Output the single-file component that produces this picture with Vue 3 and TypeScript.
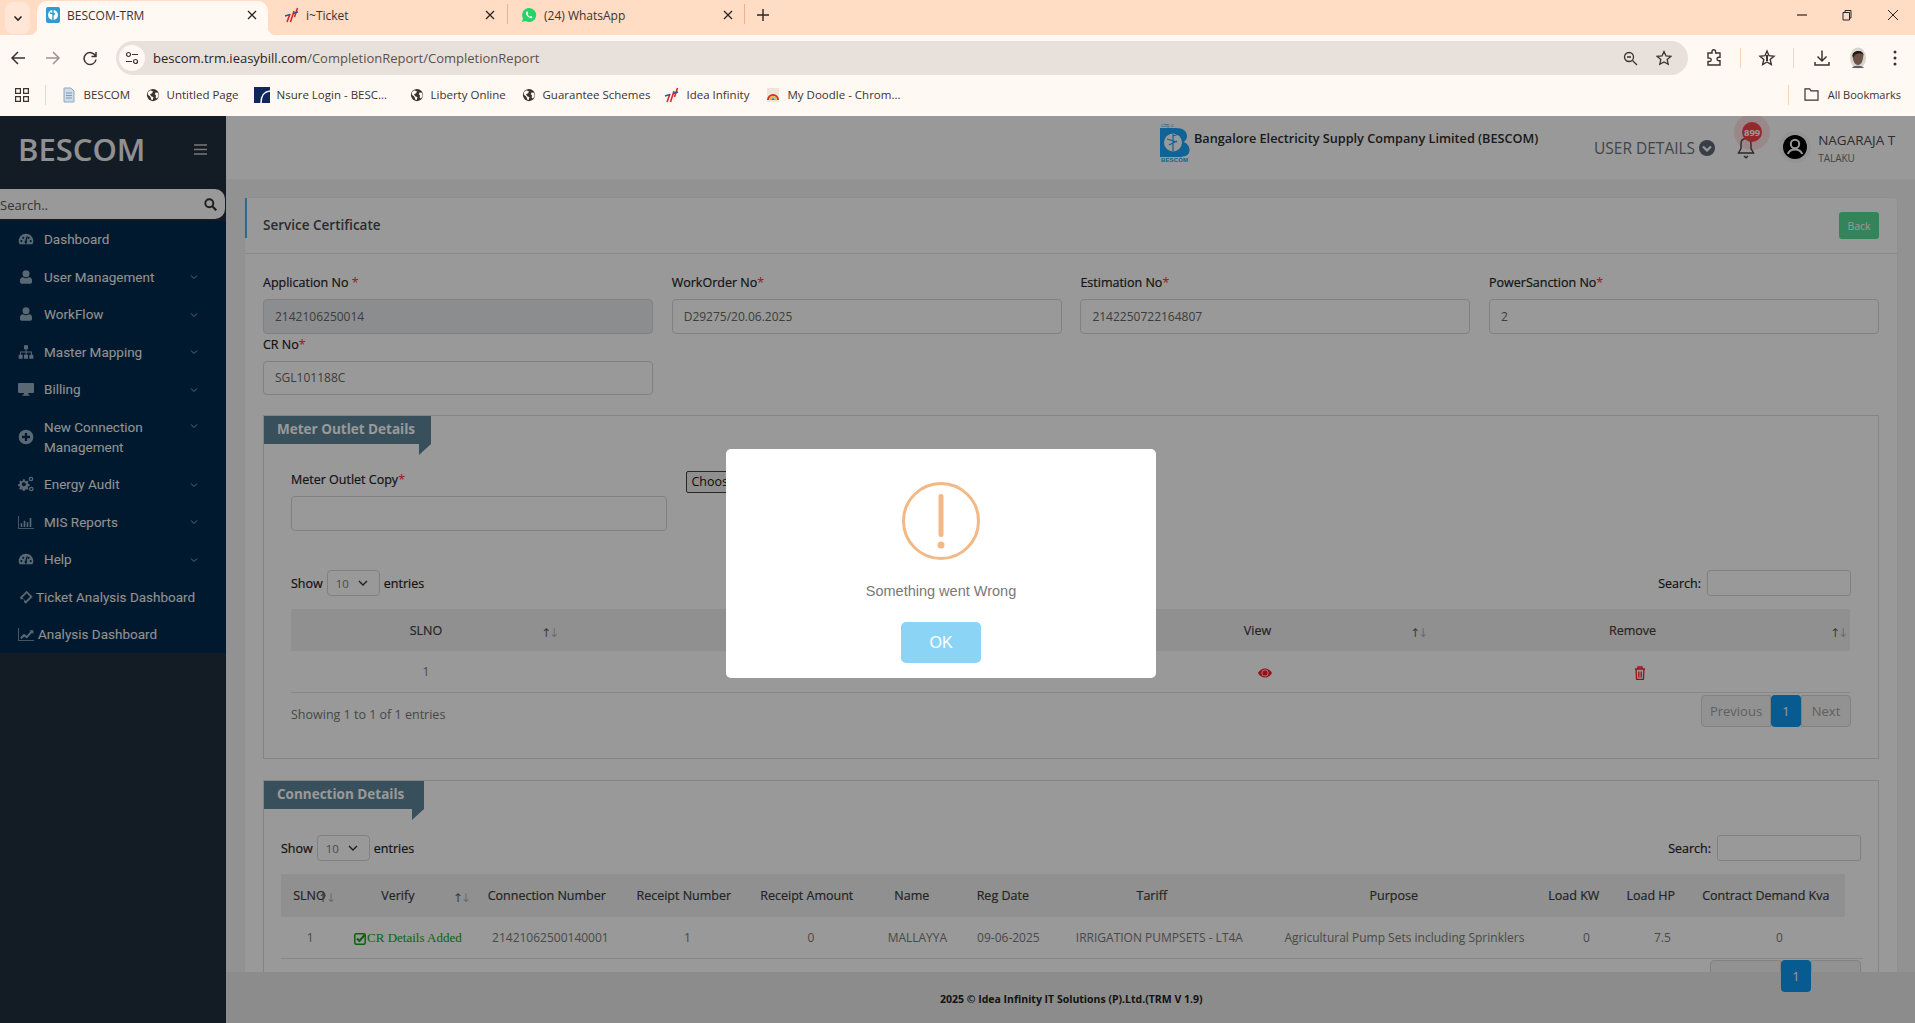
<script setup lang="ts">
interface NavItem { label: string; icon: string; caret: boolean; cls?: string }

const icons: Record<string, string> = {
  gauge: 'M12 4C5.9 4 1 8.9 1 15c0 2 .5 3.700 1.400 5h19.200c.9-1.300 1.400-3 1.400-5 0-6.100-4.900-11-11-11zM5 13.500a1.500 1.500 0 1 0 .01 0zM8 8.500a1.500 1.500 0 1 0 .01 0zM16 8.500a1.500 1.500 0 1 0 .01 0zM19 13.500a1.500 1.500 0 1 0 .01 0zM13 8l-2.200 7.100a2 2 0 1 0 2.400.4L14.500 8z',
  user: 'M12 2a5 5 0 1 1 0 10.500A5 5 0 0 1 12 2zM5.500 22c-1.500 0-2.500-1-2.500-2.500V17c0-3 2-4.500 4.500-4.500 1.200 1 2.800 1.500 4.500 1.500s3.300-.5 4.500-1.500C19 12.500 21 14 21 17v2.500c0 1.500-1 2.500-2.500 2.500z',
  sitemap: 'M9 2h6v6h-6zM1 16h6v6H1zM9 16h6v6H9zM17 16h6v6h-6zM11.300 8h1.400v3.300h8.300V16h-1.400v-3.300h-6.900V16h-1.400v-3.300H4.400V16H3v-4.700h8.300z',
  desktop: 'M1.500 3h21A1.500 1.500 0 0 1 24 4.500v12a1.500 1.500 0 0 1-1.500 1.500H15l.8 2.500h1.700V22h-11v-1.500h1.700L9 18H1.500A1.500 1.500 0 0 1 0 16.500v-12A1.500 1.500 0 0 1 1.500 3z',
  plus: 'M12 1a11 11 0 1 1 0 22 11 11 0 0 1 0-22zM10.300 6v4.300H6v3.400h4.300V18h3.400v-4.300H18v-3.400h-4.300V6z',
  cogs: 'M7.500 5h2.500l.5 2 1.800.8 1.700-1.100 1.700 1.800-1 1.700.7 1.800 2 .5v2.500l-2 .5-.7 1.800 1 1.700-1.700 1.800-1.700-1.100-1.800.8-.5 2H7.500l-.5-2-1.800-.8-1.700 1.100-1.700-1.800 1-1.700-.7-1.800-2-.5v-2.500l2-.5.7-1.800-1-1.700 1.700-1.800 1.700 1.100L7 7zM8.800 9.500a3 3 0 1 0 0 6 3 3 0 0 0 0-6zM19.500 1a3.500 3.500 0 1 1 0 7 3.500 3.500 0 0 1 0-7zm0 2a1.500 1.500 0 1 0 0 3 1.500 1.500 0 0 0 0-3zM20 16a3.500 3.500 0 1 1 0 7 3.500 3.500 0 0 1 0-7zm0 2a1.500 1.500 0 1 0 0 3 1.500 1.500 0 0 0 0-3z',
  bars: 'M0 3h1.200v18H24v1.200H0zM4 14h2.400v5.500H4zM8.500 10H11v9.500H8.500zM13 12.500h2.400v7H13zM17.500 6H20v13.500h-2.500z',
  ticket: 'M13 2.500l9 9-10.500 10.500-2.800-2.800a2.300 2.300 0 0 0-3.300-3.300L2.500 13zM13 6.500l-6.500 6.500 5 5 6.500-6.500z',
  line: 'M0 3h1.200v18H24v1.200H0zM3.500 17l5.500-5.500 4 3L19 8l-2-1.800h6v5.800l-2-2-7.700 8.700-4-3-4.300 4.300z',
}

const navItems: NavItem[] = [
  { label: 'Dashboard', icon: 'gauge', caret: false },
  { label: 'User Management', icon: 'user', caret: true },
  { label: 'WorkFlow', icon: 'user', caret: true },
  { label: 'Master Mapping', icon: 'sitemap', caret: true },
  { label: 'Billing', icon: 'desktop', caret: true },
  { label: 'New Connection Management', icon: 'plus', caret: true, cls: 'two' },
  { label: 'Energy Audit', icon: 'cogs', caret: true },
  { label: 'MIS Reports', icon: 'bars', caret: true },
  { label: 'Help', icon: 'gauge', caret: true },
  { label: 'Ticket Analysis Dashboard', icon: 'ticket', caret: false, cls: 'tight' },
  { label: 'Analysis Dashboard', icon: 'line', caret: false, cls: 'tight2' },
]

const bookmarks = [
  { icon: 'bm-doc', label: 'BESCOM', w: 16, slot: 85 },
  { icon: 'globe', label: 'Untitled Page', w: 14, slot: 108 },
  { icon: 'bm-nsure', label: 'Nsure Login - BESC...', w: 16, slot: 156 },
  { icon: 'globe', label: 'Liberty Online', w: 14, slot: 112 },
  { icon: 'globe', label: 'Guarantee Schemes', w: 14, slot: 142 },
  { icon: 'bm-idea', label: 'Idea Infinity', w: 16, slot: 101 },
  { icon: 'bm-doodle', label: 'My Doodle - Chrom...', w: 16, slot: 140 },
]

const topFields = [
  { label: 'Application No ', value: '2142106250014', disabled: true },
  { label: 'WorkOrder No', value: 'D29275/20.06.2025', disabled: false },
  { label: 'Estimation No', value: '2142250722164807', disabled: false },
  { label: 'PowerSanction No', value: '2', disabled: false },
  { label: 'CR No', value: 'SGL101188C', disabled: false },
]

const connHead = ['SLNO', 'Verify', 'Connection Number', 'Receipt Number', 'Receipt Amount', 'Name', 'Reg Date', 'Tariff', 'Purpose', 'Load KW', 'Load HP', 'Contract Demand Kva', '']
const connHeadW = [56.8, 120, 178, 96, 150, 60, 122, 176, 308, 52, 102, 128, 15]
const connBodyW = [58.4, 137, 148, 126, 121, 92, 90, 212, 278, 86, 66, 168]
const connCells = ['21421062500140001', '1', '0', 'MALLAYYA', '09-06-2025', 'IRRIGATION PUMPSETS - LT4A', 'Agricultural Pump Sets including Sprinklers', '0', '7.5', '0']
</script>

<template>
  <div class="app">
    <svg width="0" height="0" class="defs" aria-hidden="true">
      <symbol id="globe" viewBox="0 0 16 16">
        <circle cx="8" cy="8" r="7" fill="#3a3330" />
        <path d="M5 2.500l3 1.500-1 2-2.500 1L6 9.500l2.500 1-1 3.500-1.500-1-1-3-3-2.500.5-3zM11 5l3 .5.5 4-2 2.500-1.500-1 .5-2.500-1.500-1.500z" fill="#fff8f3" />
      </symbol>
      <symbol id="bm-doc" viewBox="0 0 16 16">
        <path d="M3 1h7l3 3v11H3z" fill="#cfdbe8" stroke="#8ea9c4" stroke-width="1" />
        <path d="M5 6h6M5 8.500h6M5 11h6" stroke="#7f9ab5" stroke-width="1" />
      </symbol>
      <symbol id="bm-nsure" viewBox="0 0 16 16">
        <rect x="0" y="0" width="16" height="16" fill="#10265c" />
        <path d="M7 16C7 9 9 5 16 4" fill="none" stroke="#fff" stroke-width="1.500" />
      </symbol>
      <symbol id="bm-idea" viewBox="0 0 16 16">
        <path d="M3 15l3-8M6.500 15l3.500-11M10.500 10l3-9" stroke="#d62b2b" stroke-width="1.600" fill="none" />
        <path d="M1 9l5-1.500M9 6.500l5-1.500" stroke="#2456a8" stroke-width="1.400" fill="none" />
      </symbol>
      <symbol id="bm-doodle" viewBox="0 0 16 16">
        <rect x="2" y="1" width="12" height="14" fill="#eee4da" />
        <path d="M3 13a5 5 0 0 1 10 0" fill="none" stroke="#d93025" stroke-width="2" />
        <path d="M5 13a3 3 0 0 1 6 0" fill="none" stroke="#f2b705" stroke-width="1.500" />
        <path d="M7 13a1 1 0 0 1 2 0" fill="none" stroke="#1a73e8" stroke-width="1.500" />
      </symbol>
    </svg>

    <!-- Browser chrome -->
    <div class="chrome">
      <div class="tabstrip">
        <button class="tabmenu" aria-label="Tabs">
          <svg width="12" height="12" viewBox="0 0 12 12"><path d="M2.500 4.500L6 8l3.500-3.500" fill="none" stroke="#2b2522" stroke-width="1.600" /></svg>
        </button>
        <div class="tab active">
          <svg class="fav" width="16" height="18" viewBox="0 0 16 18">
            <rect x="1" y="1" width="14" height="16" rx="2" fill="#2e9ad6" />
            <circle cx="8" cy="9" r="5" fill="#fff" />
            <path d="M8 4v10M5 7l5 1" stroke="#2e9ad6" stroke-width="1.400" />
          </svg>
          <span class="tabtitle">BESCOM-TRM</span>
          <svg class="x" width="10" height="10" viewBox="0 0 10 10"><path d="M1 1l8 8M9 1l-8 8" stroke="#2b2522" stroke-width="1.300" /></svg>
        </div>
        <div class="tab t2">
          <svg class="fav" width="16" height="16"><use href="#bm-idea" /></svg>
          <span class="tabtitle">i~Ticket</span>
          <svg class="x" width="10" height="10" viewBox="0 0 10 10"><path d="M1 1l8 8M9 1l-8 8" stroke="#2b2522" stroke-width="1.300" /></svg>
        </div>
        <div class="tab t3">
          <svg class="fav" width="16" height="16" viewBox="0 0 16 16">
            <path d="M8 1a7 7 0 0 0-6 10.500L1 15l3.600-1A7 7 0 1 0 8 1z" fill="#25d366" />
            <path d="M5.500 4.500c-1 1-.8 2.800.8 4.600 1.700 1.900 3.500 2.600 4.600 1.800l.7-1-1.800-1-.8.800c-.8-.2-2.100-1.500-2.400-2.400l.8-.8-1-1.900z" fill="#fff" />
          </svg>
          <span class="tabtitle">(24) WhatsApp</span>
          <svg class="x" width="10" height="10" viewBox="0 0 10 10"><path d="M1 1l8 8M9 1l-8 8" stroke="#2b2522" stroke-width="1.300" /></svg>
        </div>
        <svg class="newtab" width="12" height="12" viewBox="0 0 12 12"><path d="M6 0v12M0 6h12" stroke="#2b2522" stroke-width="1.400" /></svg>
        <div class="winctl">
          <svg width="10" height="10" viewBox="0 0 10 10"><path d="M0 5h10" stroke="#2b2522" stroke-width="1.200" /></svg>
          <svg width="12" height="12" viewBox="0 0 12 12"><path d="M2 3.500h6.500V11H2zM4 3.500V1.500h6v7.500H8.500" fill="none" stroke="#2b2522" stroke-width="1" /></svg>
          <svg width="12" height="12" viewBox="0 0 12 12"><path d="M1 1l10 10M11 1L1 11" stroke="#2b2522" stroke-width="1" /></svg>
        </div>
      </div>

      <div class="toolbar">
        <svg class="nav-a" width="16" height="16" viewBox="0 0 16 16"><path d="M15 8H2M8 2L2 8l6 6" fill="none" stroke="#3a3330" stroke-width="1.500" /></svg>
        <svg class="nav-b" width="16" height="16" viewBox="0 0 16 16"><path d="M1 8h13M8 2l6 6-6 6" fill="none" stroke="#9c938c" stroke-width="1.500" /></svg>
        <svg class="nav-c" width="16" height="16" viewBox="0 0 16 16"><path d="M13.500 6A6 6 0 1 0 14 9.500M14 2v4.500H9.500" fill="none" stroke="#3a3330" stroke-width="1.500" /></svg>
        <div class="omnibox">
          <span class="site">
            <svg width="14" height="14" viewBox="0 0 14 14"><circle cx="3.500" cy="3.500" r="2" fill="none" stroke="#3a3330" stroke-width="1.200" /><path d="M7 3.500h6M1 10.500h6" stroke="#3a3330" stroke-width="1.200" /><circle cx="10.500" cy="10.500" r="2" fill="none" stroke="#3a3330" stroke-width="1.200" /></svg>
          </span>
          <span class="url"><b>bescom.trm.ieasybill.com</b>/CompletionReport/CompletionReport</span>
          <svg class="ob1" width="15" height="15" viewBox="0 0 15 15"><circle cx="6" cy="6" r="4.500" fill="none" stroke="#3a3330" stroke-width="1.300" /><path d="M9.500 9.500L14 14M4 6h4" stroke="#3a3330" stroke-width="1.300" /></svg>
          <svg class="ob2" width="16" height="16" viewBox="0 0 16 16"><path d="M8 1.500l2 4.400 4.800.5-3.600 3.200 1 4.700L8 11.900l-4.200 2.400 1-4.700L1.200 6.400 6 5.900z" fill="none" stroke="#3a3330" stroke-width="1.300" /></svg>
        </div>
        <div class="tools">
          <svg width="18" height="18" viewBox="0 0 18 18"><path d="M3 4h4V2.500a1.800 1.800 0 0 1 3.600 0V4H15v4.200h-1.200a1.800 1.800 0 0 0 0 3.600H15V16H3v-3.500h1.500a1.700 1.700 0 0 0 0-3.400H3z" fill="none" stroke="#3a3330" stroke-width="1.400" /></svg>
          <i class="vsep"></i>
          <svg width="18" height="18" viewBox="0 0 18 18"><path d="M9 2l2 4.700 5 .5-3.800 3.300 1.100 5L9 13l-4.300 2.500 1.100-5L2 7.200l5-.5z" fill="none" stroke="#3a3330" stroke-width="1.400" /><path d="M9 6v6" stroke="#3a3330" stroke-width="2" /></svg>
          <i class="vsep"></i>
          <svg class="dl" width="18" height="18" viewBox="0 0 18 18"><path d="M9 1.500v10M4.500 7.500L9 12l4.500-4.500M2 13v3h14v-3" fill="none" stroke="#3a3330" stroke-width="1.500" /></svg>
          <svg class="me" width="18" height="22" viewBox="0 0 18 22">
            <ellipse cx="9" cy="11" rx="8" ry="10.500" fill="#d8d4d0" />
            <path d="M3.500 9C3.500 3 14 2 14.500 8L14 11c-.5 4-2 7-5 7-2.500 0-4.500-3-5-6z" fill="#6b5244" />
            <path d="M3.500 9C3.500 3 14 2 14.500 8c-2 -2-4-1.500-5-1.500-2 0-4 1-5 4z" fill="#1f1a18" />
            <path d="M3 21c1-3 10-3 12 0z" fill="#54606a" />
          </svg>
          <svg width="6" height="18" viewBox="0 0 6 18"><circle cx="3" cy="3" r="1.500" fill="#3a3330" /><circle cx="3" cy="9" r="1.500" fill="#3a3330" /><circle cx="3" cy="15" r="1.500" fill="#3a3330" /></svg>
        </div>
      </div>

      <div class="bookmarks">
        <svg class="apps" width="14" height="14" viewBox="0 0 14 14"><path d="M.6.6h4.800v4.800H.6zM8.600.6h4.800v4.800H8.600zM.6 8.600h4.800v4.800H.6zM8.600 8.600h4.800v4.800H8.600z" fill="none" stroke="#3a3330" stroke-width="1.200" /></svg>
        <i class="bsep"></i>
        <div v-for="b in bookmarks" :key="b.label" class="bm" :style="{ width: b.slot + 'px' }">
          <svg :width="b.w" height="16"><use :href="'#' + b.icon" /></svg>
          <span>{{ b.label }}</span>
        </div>
        <div class="allbm">
          <i class="bsep"></i>
          <svg width="15" height="13" viewBox="0 0 16 14"><path d="M1 1h5l1.500 2H15v10H1z" fill="none" stroke="#3a3330" stroke-width="1.300" /></svg>
          <span>All Bookmarks</span>
        </div>
      </div>
    </div>

    <!-- Page -->
    <div class="page">
      <aside class="sidebar">
        <div class="brand">
          <span class="brandname">BESCOM</span>
          <svg width="13" height="11" viewBox="0 0 13 11"><path d="M0 1h13M0 5.500h13M0 10h13" stroke="#c8c8c8" stroke-width="1.700" /></svg>
        </div>
        <div class="sidesearch">
          <input class="sideinput" placeholder="Search.." />
          <svg width="13" height="13" viewBox="0 0 13 13"><circle cx="5.300" cy="5.300" r="4" fill="none" stroke="#333" stroke-width="1.900" /><path d="M8.300 8.300L12.300 12.300" stroke="#333" stroke-width="2.200" /></svg>
        </div>
        <nav class="menu">
          <a v-for="item in navItems" :key="item.label" class="item" :class="item.cls">
            <svg class="mi" width="16" height="16" viewBox="0 0 24 24"><path :d="icons[item.icon]" fill-rule="evenodd" /></svg>
            <span class="lbl">{{ item.label }}</span>
            <svg v-if="item.caret" class="car" width="8" height="6" viewBox="0 0 8 6"><path d="M1 1.500L4 4.500 7 1.500" fill="none" stroke="#9fb2c3" stroke-width="1" /></svg>
          </a>
        </nav>
      </aside>

      <div class="main">
        <header class="topbar">
          <svg class="logo" width="30" height="42" viewBox="0 0 30 42">
            <text x="1" y="5.500" font-size="5.500" fill="#1a9ae0" font-family="'Noto Sans', sans-serif">ಬೆಸ್ಕಾಂ</text>
            <path d="M0 7h16c7 0 11 3 11 8 0 3-1.500 5-3.500 6 3.500 1 6 4 6 8 0 5-4 7-11 7H0z" fill="#19a5fa" />
            <circle cx="13" cy="21.500" r="9" fill="#fff" />
            <path d="M13 13v17M7 18l10 3M9 24l8-4M13 15l6-2" stroke="#19a5fa" stroke-width="1.200" fill="none" />
            <text x="1" y="41" font-size="6" font-weight="700" fill="#19a5fa" font-family="'Liberation Sans', sans-serif" textLength="27">BESCOM</text>
          </svg>
          <div class="company">Bangalore Electricity Supply Company Limited (BESCOM)</div>
          <div class="userdetails">
            <span>USER DETAILS</span>
            <svg width="16" height="16" viewBox="0 0 16 16"><circle cx="8" cy="8" r="8" fill="#5c6874" /><path d="M4 6.500l4 4 4-4" fill="none" stroke="#fff" stroke-width="2.200" /></svg>
          </div>
          <div class="bell">
            <svg width="20" height="22" viewBox="0 0 20 22"><path d="M10 1.500c-3.500 0-5 2.800-5 5.500v4.500L2.500 16h15L15 11.500V7c0-2.700-1.500-5.500-5-5.500z" fill="none" stroke="#444" stroke-width="1.400" /><path d="M8 19l2 1.800L12 19" fill="none" stroke="#444" stroke-width="1.400" /></svg>
            <span class="halo"></span>
            <span class="badge">899</span>
          </div>
          <div class="avatar">
            <svg width="24" height="24" viewBox="0 0 24 24">
              <circle cx="12" cy="12" r="12" fill="#000" />
              <circle cx="12" cy="9" r="4.200" fill="none" stroke="#fff" stroke-width="2" />
              <path d="M4.800 19c1.200-3.300 4-4.500 7.200-4.500s6 1.200 7.200 4.500" fill="none" stroke="#fff" stroke-width="2" />
            </svg>
          </div>
          <div class="who">
            <div class="whoname">NAGARAJA T</div>
            <div class="whorole">TALAKU</div>
          </div>
        </header>

        <div class="content">
          <section class="card">
            <i class="accent"></i>
            <div class="cardhead">
              <span class="cardtitle">Service Certificate</span>
              <button class="back">Back</button>
            </div>
            <div class="cardbody">
              <div class="fields">
                <div v-for="f in topFields" :key="f.label" class="field">
                  <label class="lab">{{ f.label }}<em>*</em></label>
                  <input class="ctl" :class="{ dis: f.disabled }" :value="f.value" readonly />
                </div>
              </div>

              <div class="box box1">
                <div class="ribbon">Meter Outlet Details</div>
                <div class="uploadrow">
                  <div class="field up">
                    <label class="lab">Meter Outlet Copy<em>*</em></label>
                    <input class="ctl" readonly />
                  </div>
                  <button class="file">Choose File</button>
                </div>
                <div class="dtctl">
                  <div class="show">Show
                    <span class="sel">10
                      <svg width="10" height="6" viewBox="0 0 10 6"><path d="M1 1l4 4 4-4" fill="none" stroke="#333" stroke-width="1.400" /></svg>
                    </span>
                    entries</div>
                  <div class="srch">Search: <input class="mini" readonly /></div>
                </div>
                <table class="dt t1">
                  <colgroup><col class="c270" /><col class="c540" /><col class="c330" /><col class="c420" /></colgroup>
                  <thead>
                    <tr>
                      <th class="slno">SLNO<span class="sort"><b>↑</b>↓</span></th>
                      <th></th>
                      <th class="off">View<span class="sort"><b>↑</b>↓</span></th>
                      <th class="off">Remove<span class="sort"><b>↑</b>↓</span></th>
                    </tr>
                  </thead>
                  <tbody>
                    <tr>
                      <td>1</td>
                      <td></td>
                      <td>
                        <svg width="14" height="14" viewBox="0 0 14 14"><path d="M7 2.500C3.500 2.500 1 5 0 7c1 2 3.500 4.500 7 4.500S13 9 14 7c-1-2-3.500-4.500-7-4.500z" fill="#ff1b2b" /><circle cx="7" cy="7" r="3.200" fill="#ff1b2b" stroke="#fff" stroke-width=".8" /></svg>
                      </td>
                      <td>
                        <svg width="12" height="14" viewBox="0 0 12 14"><path d="M1 3h10M4 3V1h4v2M2 3l.6 10.500h6.800L10 3z" fill="none" stroke="#ff1b2b" stroke-width="1.300" /><path d="M4.500 5.500v6M6 5.500v6M7.500 5.500v6" stroke="#ff1b2b" stroke-width=".9" /></svg>
                      </td>
                    </tr>
                  </tbody>
                </table>
                <div class="dtfoot">
                  <div class="info">Showing 1 to 1 of 1 entries</div>
                  <div class="pager">
                    <span class="pg prev">Previous</span><span class="pg on">1</span><span class="pg next">Next</span>
                  </div>
                </div>
              </div>

              <div class="box box2">
                <div class="ribbon">Connection Details</div>
                <div class="dtctl second">
                  <div class="show">Show
                    <span class="sel">10
                      <svg width="10" height="6" viewBox="0 0 10 6"><path d="M1 1l4 4 4-4" fill="none" stroke="#333" stroke-width="1.400" /></svg>
                    </span>
                    entries</div>
                  <div class="srch">Search: <input class="mini" readonly /></div>
                </div>
                <table class="dt t2h">
                  <colgroup><col v-for="(w, i) in connHeadW" :key="i" :style="{ width: w + 'px' }" /></colgroup>
                  <thead>
                    <tr>
                      <th v-for="(h, i) in connHead" :key="i" :class="{ verify: i === 1 }">{{ h }}<span v-if="i < 2" class="sort"><b>↑</b>↓</span></th>
                    </tr>
                  </thead>
                </table>
                <table class="dt t2b">
                  <colgroup><col v-for="(w, i) in connBodyW" :key="i" :style="{ width: w + 'px' }" /></colgroup>
                  <tbody>
                    <tr>
                      <td>1</td>
                      <td class="added">
                        <svg width="12" height="12" viewBox="0 0 12 12"><rect x=".8" y=".8" width="10.400" height="10.400" rx="1.500" fill="none" stroke="#199f19" stroke-width="1.500" /><path d="M3 5.500l2.500 2.500L10.500 2" fill="none" stroke="#199f19" stroke-width="2" /></svg>CR Details Added
                      </td>
                      <td v-for="(c, i) in connCells" :key="i">{{ c }}</td>
                    </tr>
                  </tbody>
                </table>
                <div class="pager p2">
                  <span class="pg prev">Previous</span><span class="pg on">1</span><span class="pg next">Next</span>
                </div>
              </div>
            </div>
          </section>
        </div>

        <footer class="foot">2025 © Idea Infinity IT Solutions (P).Ltd.(TRM V 1.9)</footer>
      </div>

      <!-- Alert -->
      <div class="overlay">
        <div class="alert" role="dialog">
          <svg class="warn" width="82" height="82" viewBox="0 0 82 82">
            <circle cx="41" cy="41" r="37.500" fill="none" stroke="#f2b885" stroke-width="3" />
            <rect x="38.500" y="14" width="5" height="43" rx="2.500" fill="#f2b885" />
            <circle cx="41" cy="65" r="3.500" fill="#f2b885" />
          </svg>
          <p class="msg">Something went Wrong</p>
          <button class="ok">OK</button>
        </div>
      </div>
    </div>
  </div>
</template>

<style>
html, body { margin: 0; overflow: hidden; }
</style>

<style scoped>
.app { width: 1915px; height: 1023px; display: flex; flex-direction: column; overflow: hidden; font-family: "Open Sans", "Noto Sans", sans-serif; position: relative; }
.defs { position: absolute; }
button { font-family: inherit; }

/* chrome */
.chrome { height: 116px; flex: none; background: #fff8f3; color: #3a3330; display: flex; flex-direction: column; }
.tabstrip { height: 35px; background: #ffdcc3; display: flex; align-items: center; flex: none; }
.tabmenu { width: 25px; height: 32px; margin: 0 7px 0 5px; padding: 0; border: 0; border-radius: 8px; background: #ffe6d6; display: flex; align-items: center; justify-content: center; }
.tab { height: 34px; margin-top: 1px; padding-bottom: 6px; display: flex; align-items: center; font-size: 12px; box-sizing: border-box; position: relative; flex: none; }
.tab.active { width: 231px; background: #fff8f3; border-radius: 10px 10px 0 0; padding-left: 8px; }
.tab.active::before, .tab.active::after { content: ""; position: absolute; bottom: 0; width: 8px; height: 8px; }
.tab.active::before { left: -8px; background: radial-gradient(circle at 0 0, transparent 8px, #fff8f3 8.500px); }
.tab.active::after { right: -8px; background: radial-gradient(circle at 100% 0, transparent 8px, #fff8f3 8.500px); }
.tab.t2 { width: 241px; padding-left: 16px; }
.tab.t3 { width: 237px; padding-left: 12px; }
.tab.t2::after, .tab.t3::after { content: ""; position: absolute; right: 1px; top: 3px; height: 20px; width: 1px; background: #e8b48e; }
.fav { flex: none; }
.tabtitle { margin-left: 6px; white-space: nowrap; }
.tab.t3 .tabtitle { margin-left: 7px; }
.x { position: absolute; top: 9px; }
.tab.active .x { right: 11px; }
.tab.t2 .x { right: 14px; }
.tab.t3 .x { right: 13px; }
.newtab { margin: 0 0 6px 11px; flex: none; }
.winctl { margin: 0 0 6px auto; width: 118px; display: flex; justify-content: space-between; align-items: center; padding-right: 16px; box-sizing: border-box; }

.toolbar { height: 40px; padding-top: 6px; box-sizing: border-box; display: flex; align-items: center; flex: none; }
.nav-a { margin-left: 10px; }
.nav-b { margin-left: 19px; }
.nav-c { margin-left: 21px; }
.omnibox { margin-left: 18px; width: 1572px; height: 34px; background: #e8e0da; border-radius: 17px; display: flex; align-items: center; position: relative; flex: none; }
.site { width: 26px; height: 26px; background: #fff8f3; border-radius: 50%; margin-left: 3px; display: flex; align-items: center; justify-content: center; flex: none; }
.url { margin-left: 8px; font-size: 13px; color: #5a524c; white-space: nowrap; }
.url b { font-weight: 400; color: #2b2522; }
.ob1 { margin-left: auto; }
.ob2 { margin-left: 18px; margin-right: 16px; }
.tools { display: flex; align-items: center; margin-left: 17px; flex: none; }
.vsep { display: block; width: 1px; height: 20px; background: #f2d3bd; margin: 0 17px; }
.dl { margin-left: 2px; }
.me { margin: 0 25px 0 18px; }

.bookmarks { height: 41px; padding-bottom: 2px; display: flex; align-items: center; font-size: 11.500px; position: relative; flex: none; box-sizing: border-box; }
.apps { margin-left: 15px; }
.bsep { display: block; width: 1px; height: 20px; background: #f2d3bd; margin: 0 15px 0 16px; }
.bm { display: flex; align-items: center; white-space: nowrap; flex: none; }
.bm span { margin-left: 6.500px; }
.allbm { margin-left: auto; display: flex; align-items: center; white-space: nowrap; padding-right: 14px; font-size: 11px; }
.allbm .bsep { margin: 0 15px 0 0; }
.allbm span { margin-left: 9px; }

/* page */
.page { height: 907px; display: flex; position: relative; overflow: hidden; flex: none; background: #f3f4f6; }
.sidebar { width: 226px; flex: none; background: #212d3f; display: flex; flex-direction: column; }
.brand { height: 73px; display: flex; align-items: center; justify-content: space-between; padding: 0 19px 7px 18px; box-sizing: border-box; flex: none; }
.brandname { color: #f0f0f0; font-size: 31px; font-weight: 600; line-height: 1; }
.sidesearch { height: 30px; width: 225px; background: #fff; border-radius: 0 10px 10px 0; display: flex; align-items: center; box-sizing: border-box; padding-right: 8px; flex: none; }
.sideinput { flex: 1; min-width: 0; border: 0; padding: 2px 0 0; background: transparent; outline: 0; font: 13px "Open Sans", sans-serif; }
.sideinput::placeholder { color: #555; }
.menu { margin-top: 1.500px; background: #022b4d; display: flex; flex-direction: column; font-family: Roboto, sans-serif; font-size: 13.500px; }
.item { min-height: 37.500px; box-sizing: border-box; padding: 8.750px 0 8.750px 18px; display: flex; align-items: center; color: #f4f4f4; line-height: 20px; position: relative; }
.mi { width: 16px; height: 16px; fill: #96adc2; flex: none; }
.lbl { margin-left: 10px; width: 125px; }
.item.tight .lbl { margin-left: 2px; width: auto; white-space: nowrap; }
.item.tight2 .lbl { margin-left: 4px; width: auto; white-space: nowrap; }
.car { position: absolute; left: 190px; top: 16px; }
.item.two .car { top: 15px; }

.main { flex: 1; min-width: 0; display: flex; flex-direction: column; }
.topbar { height: 63px; flex: none; background: #fff; display: flex; align-items: flex-start; padding-left: 934px; box-sizing: border-box; }
.logo { margin-top: 5px; flex: none; }
.company { margin: 12px 0 0 4px; width: 346px; flex: none; white-space: nowrap; font-size: 12.700px; font-weight: 600; line-height: 20px; color: #2c2c2c; }
.userdetails { margin: 21px 0 0 54px; display: flex; align-items: center; gap: 4px; font-size: 15.500px; line-height: 22px; color: #6b737c; white-space: nowrap; flex: none; }
.bell { position: relative; width: 20px; height: 22px; margin: 21px 0 0 21px; flex: none; }
.halo { position: absolute; left: -2px; top: -23px; width: 36px; height: 36px; border-radius: 50%; background: rgba(255, 66, 73, .15); }
.badge { position: absolute; left: 6px; top: -15px; width: 20px; height: 20px; border-radius: 50%; background: #f8434b; color: #fff; font-size: 9.500px; font-weight: 700; display: flex; align-items: center; justify-content: center; }
.avatar { width: 32px; height: 32px; margin: 15px 0 0 23px; border-radius: 50%; background: #f7f7f7; display: flex; align-items: center; justify-content: center; flex: none; }
.who { margin: 14px 0 0 7px; flex: none; white-space: nowrap; }
.whoname { font-size: 13.500px; line-height: 20px; color: #4c4c4c; }
.whorole { font-size: 10px; line-height: 14px; margin-top: 1px; color: #707070; }

.content { flex: 1; min-height: 0; padding: 19px 18px 0 19px; }
.card { position: relative; background: #fff; border-radius: 4px; box-shadow: 0 0 0 1px rgba(0,0,0,.02); }
.accent { position: absolute; left: 0; top: 0; width: 2px; height: 40px; background: #4bb0e6; }
.cardhead { height: 55px; display: flex; align-items: center; justify-content: space-between; padding: 0 18px; border-bottom: 1px solid #e4e4e4; }
.cardtitle { font-size: 13.500px; font-weight: 600; color: #4a4a4a; margin-bottom: 2px; }
.back { width: 40px; height: 27px; padding: 0; border: 0; border-radius: 3px; background: #55dd94; color: #fff; font-size: 10.500px; }
.cardbody { padding: 18px 18px 0; }
.fields { display: grid; grid-template-columns: repeat(4, 390px); column-gap: 18.700px; }
.field { display: flex; flex-direction: column; height: 61.500px; }
.lab { height: 20px; line-height: 21px; margin-bottom: 7px; font-size: 12.500px; font-weight: 500; color: #222; -webkit-text-stroke: .2px #222; white-space: nowrap; }
.lab em { font-style: normal; color: #ff2a3a; -webkit-text-stroke: 0; }
.ctl { height: 34.500px; box-sizing: border-box; border: 1px solid #d6d8db; border-radius: 4px; background: #fff; padding: 0 11px; font: 12px "Open Sans", sans-serif; color: #666; outline: 0; width: 100%; }
.ctl.dis { background: #e9ecef; }

.box { border: 1px solid #dcdcdc; box-sizing: border-box; }
.box1 { margin-top: 20px; height: 344px; padding: 0 27px; }
.box2 { margin-top: 21px; height: 300px; padding: 0 17px; }
.ribbon { width: fit-content; height: 28px; line-height: 26px; margin-left: -27px; padding: 0 16px 0 13px; background: #5e8599; color: #fff; font-size: 13.500px; font-weight: 700; position: relative; white-space: nowrap; }
.box2 .ribbon { margin-left: -17px; padding-right: 20px; }
.ribbon::after { content: ""; position: absolute; right: 0; top: 28px; border-style: solid; border-width: 11px 12px 0 0; border-color: #5e8599 transparent transparent transparent; }
.uploadrow { margin-top: 25px; display: flex; align-items: flex-start; gap: 19px; }
.field.up { width: 375.500px; }
.file { height: 22px; width: 92px; margin-top: 1.500px; padding: 0 0 0 5px; text-align: left; border: 1px solid #444; border-radius: 2px; background: #efefef; color: #111; font-size: 12.500px; white-space: nowrap; }
.dtctl { margin-top: 39.500px; height: 26px; display: flex; justify-content: space-between; align-items: center; font-size: 12.500px; font-weight: 500; color: #222; -webkit-text-stroke: .2px #222; }
.dtctl.second { margin-top: 26px; }
.show { display: flex; align-items: center; gap: 4px; }
.sel { width: 53px; height: 26px; box-sizing: border-box; border: 1px solid #d6d8db; border-radius: 4px; display: flex; align-items: center; gap: 9px; padding-left: 8px; font-size: 11.500px; font-weight: 400; color: #7b7b7b; -webkit-text-stroke: 0; }
.srch { display: flex; align-items: center; gap: 6px; }
.mini { width: 144px; height: 26px; box-sizing: border-box; border: 1px solid #d6d8db; border-radius: 3px; background: #fff; outline: 0; }

.dt { table-layout: fixed; border-collapse: collapse; margin-top: 13px; font-size: 12px; color: #7a7a7a; }
.t1 { width: 1559px; }
.c270 { width: 270px; }
.c540 { width: 539px; }
.c330 { width: 330px; }
.c420 { width: 420px; }
.dt thead tr { background: #f0f0f0; }
.dt th { height: 42px; padding: 0; font-size: 12.500px; font-weight: 500; color: #3c3c3c; -webkit-text-stroke: .2px #3c3c3c; white-space: nowrap; text-align: center; position: relative; }
.dt th.off { padding-right: 15px; }
.dt td { height: 41px; padding: 0; text-align: center; border-bottom: 1px solid #e2e2e2; white-space: nowrap; }
.dt td svg { vertical-align: middle; }
.sort { position: absolute; right: 4px; top: 17px; font-family: "DejaVu Sans", sans-serif; font-size: 12px; font-weight: 400; color: #b5b5b5; letter-spacing: -2px; line-height: 14px; -webkit-text-stroke: 0; }
.sort b { font-weight: 400; color: #666; }
.t2h { width: 1563.800px; margin-top: 13px; }
.t2h th { height: 43px; padding: 0; }
.t2h th.verify .sort { right: -11px; }
.t2b { width: 1582.400px; margin-top: 0; }
.dt td.added { font-family: "Liberation Serif", serif; font-size: 13px; color: #199f19; }
.added svg { margin-right: 1px; vertical-align: -1px; }
.dtfoot { display: flex; justify-content: space-between; align-items: flex-start; margin-top: 2px; }
.info { font-size: 12.500px; color: #777; margin-top: 11px; }
.pager { display: flex; width: 150px; height: 32px; font-size: 13px; color: #a0a0a0; box-sizing: border-box; }
.pg { display: flex; align-items: center; justify-content: center; box-sizing: border-box; height: 32px; border: 1px solid #d6d8db; background: #f3f3f3; }
.pg.prev { width: 70px; border-radius: 4px 0 0 4px; }
.pg.next { width: 50px; border-radius: 0 4px 4px 0; }
.pg.on { width: 30px; background: #0c98f0; border: 0; color: #fff; border-radius: 4px; position: relative; z-index: 2; }
.p2 { margin: 1px 0 0 auto; width: 151px; }
.p2 .pg.prev { width: 71px; }

.foot { height: 51px; flex: none; background: #e9e9e9; position: relative; z-index: 1; display: flex; align-items: center; padding-left: 714px; box-sizing: border-box; font-size: 10.500px; font-weight: 700; color: #222; padding-top: 3px; white-space: nowrap; }

/* alert */
.overlay { position: absolute; inset: 0; background: rgba(0, 0, 0, .4); z-index: 100; }
.alert { position: absolute; left: 726px; top: 333px; width: 430px; height: 229px; background: #fff; border-radius: 5px; display: flex; flex-direction: column; align-items: center; }
.warn { margin-top: 31px; flex: none; }
.msg { margin: 19px 0 0; font-family: "Liberation Sans", Arial, sans-serif; font-size: 14.500px; line-height: 20px; color: #797979; }
.ok { margin-top: 21px; width: 80px; height: 41px; padding: 0; border: 0; border-radius: 5px; background: #8cd4f5; color: #fff; font-family: "Liberation Sans", Arial, sans-serif; font-size: 16px; }
</style>
